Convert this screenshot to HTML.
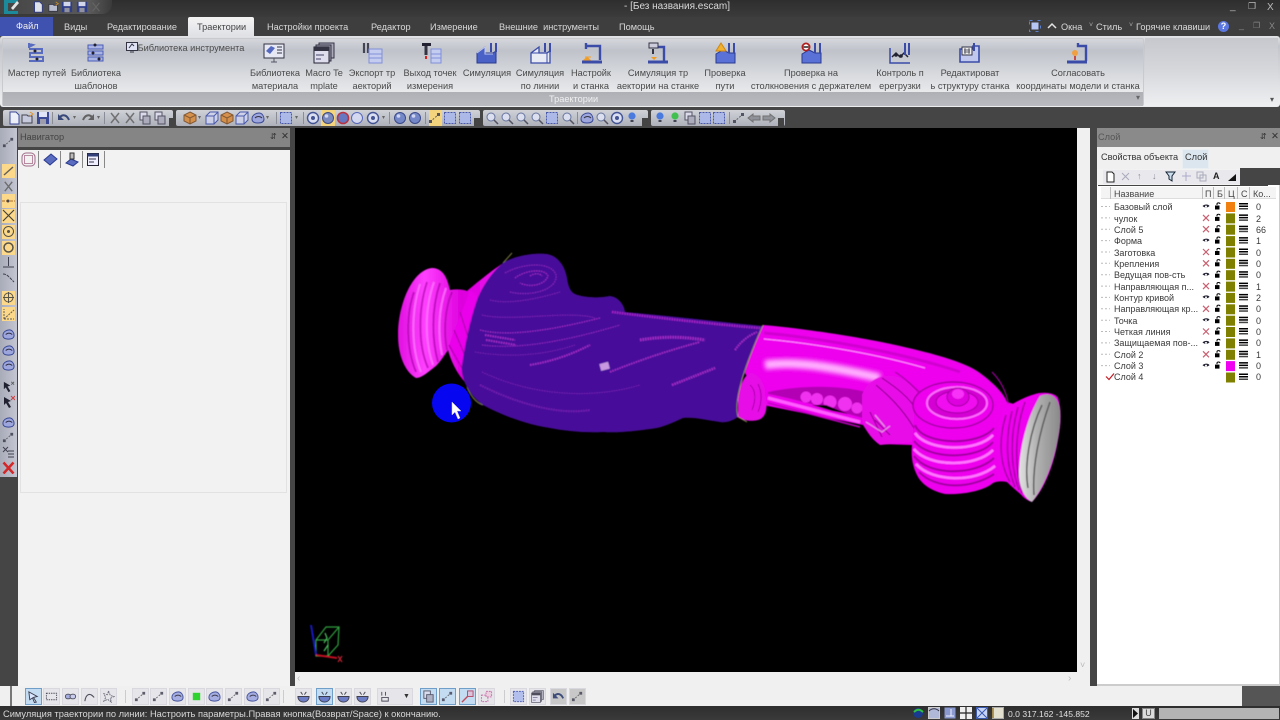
<!DOCTYPE html>
<html lang="ru"><head><meta charset="utf-8"><title>escam</title>
<style>
html,body{margin:0;padding:0;width:1280px;height:720px;overflow:hidden;background:#444;font-family:"Liberation Sans",sans-serif}
div,span,svg{position:absolute}
.m{top:22px;font-size:9.2px;color:#d8d8d8;white-space:nowrap}
.r{font-size:9.2px;color:#4a4a4a;text-align:center;white-space:nowrap;line-height:13px;transform:translateX(-50%)}
.ic{top:42px;width:22px;height:22px}
.tb{top:110px;height:16px;background:linear-gradient(#d0d2d8,#aeb0ba);border-radius:2px}
.ti{top:111px;width:14px;height:14px;opacity:.88}
.bi{top:688px;width:17px;height:17px;background:#e6e6ea;border:1px solid #d8d8de;box-sizing:border-box}
.bi.h{background:#c4dcf2;border-color:#6f9fc8}
.bi svg{left:1px;top:1px;width:13px;height:13px;opacity:.85}
.li{left:2px;width:13px;height:13px;opacity:.9}
.lh{left:2px;width:13px;height:14px;background:#fcd88a}
.nm{left:1114px;margin-top:1px;font-size:9px;color:#3a3a3a;white-space:nowrap;line-height:11px}
.ct{left:1256px;margin-top:1px;font-size:9px;color:#3a3a3a;line-height:11px}
.hd{top:189px;height:10px;font-size:9px;color:#444;line-height:10px;white-space:nowrap}
.dd{top:114px;font-size:6px;color:#666;line-height:8px}
.sp{top:112px;width:1px;height:12px;background:#8a8c96}
</style></head><body>
<svg width="0" height="0" style="left:0;top:0"><defs>
<symbol id="path" viewBox="0 0 22 22"><path d="M4 1v5M4 2l4 1-4 2M4 7h13v4H5v4h13v4H4" fill="none" stroke="#5a6cc0" stroke-width="2"/><circle cx="10" cy="9" r="1.5" fill="#223"/><circle cx="12" cy="17" r="1.5" fill="#223"/></symbol>
<symbol id="lib" viewBox="0 0 22 22"><path d="M3 3h15v4H3zM3 9h15v4H3zM3 15h15v4H3z" fill="#aab4e4" stroke="#4a5cb8"/><circle cx="10" cy="3" r="1.5" fill="#223"/><circle cx="8" cy="11" r="1.5" fill="#223"/><circle cx="14" cy="17" r="1.5" fill="#223"/></symbol>
<symbol id="mat" viewBox="0 0 22 22"><rect x="1" y="2" width="20" height="14" fill="#e6e8f4" stroke="#334"/><path d="M3 9l5-5 4 2-5 6z" fill="#5568c0"/><path d="M14 5h5M14 8h5M14 11h5" stroke="#334"/><path d="M8 20h6M11 16v4" stroke="#556"/></symbol>
<symbol id="mac" viewBox="0 0 22 22"><rect x="6" y="1" width="15" height="15" fill="#aab" stroke="#334"/><rect x="3" y="3" width="15" height="16" fill="#99a" stroke="#334"/><rect x="1" y="5" width="15" height="16" fill="#dde" stroke="#223"/><rect x="1" y="5" width="15" height="4" fill="#334"/><path d="M3 13h8M3 17h5" stroke="#446"/></symbol>
<symbol id="exp" viewBox="0 0 22 22"><path d="M3 1v10M7 1v10" stroke="#445" stroke-width="2.2"/><rect x="8" y="7" width="13" height="14" fill="#c4ccf0" stroke="#8090d8"/><path d="M8 12h13M8 16h13" stroke="#8090d8"/></symbol>
<symbol id="pt" viewBox="0 0 22 22"><path d="M2 1h9v3H2z" fill="#223"/><path d="M6 4v9" stroke="#334" stroke-width="3"/><path d="M6 14v3" stroke="#e02020" stroke-width="2"/><rect x="11" y="7" width="10" height="14" fill="#c4ccf0" stroke="#8090d8"/><path d="M11 12h10M11 16h10" stroke="#8090d8"/></symbol>
<symbol id="sim" viewBox="0 0 22 22"><path d="M1 21V11l8-6v6h8l3-2v12z" fill="#4a62c8" stroke="#2a3a90"/><path d="M1 11l8-6h0v7h8" fill="none" stroke="#c0c8f0"/><path d="M15 1v9M20 1v9" stroke="#3a4ca8" stroke-width="2"/></symbol>
<symbol id="siml" viewBox="0 0 22 22"><path d="M1 21V11l8-6v6h8l3-2v12z" fill="#e8eaf4" stroke="#3a4ca8" stroke-width="1.3"/><path d="M1 11h16v10M9 5v6" fill="none" stroke="#3a4ca8"/><path d="M15 1v9M20 1v9" stroke="#3a4ca8" stroke-width="2"/></symbol>
<symbol id="mc" viewBox="0 0 22 22"><path d="M5 1v6M5 4h14v14" fill="none" stroke="#3a4ca8" stroke-width="2.4"/><path d="M1 20h20" stroke="#3a4ca8" stroke-width="3"/><path d="M6 15l3 3h-6zM4 15h6" fill="#f09a20" stroke="#f0a030"/></symbol>
<symbol id="mc2" viewBox="0 0 22 22"><path d="M3 5h15v15" fill="none" stroke="#3a4ca8" stroke-width="2.4"/><rect x="3" y="1" width="9" height="5" fill="#ccd" stroke="#334"/><path d="M2 20h20" stroke="#3a4ca8" stroke-width="3"/><path d="M7 7v5" stroke="#334" stroke-width="2"/><path d="M5 15h6l-3 3z" fill="#f09a20"/></symbol>
<symbol id="chk" viewBox="0 0 22 22"><path d="M2 21v-9l7-4 6 3h6v10z" fill="#5a72d8" stroke="#2a3a90"/><path d="M15 1v10M20 1v10" stroke="#3a4ca8" stroke-width="2"/><path d="M7 1l5 8H2z" fill="#f0b030" stroke="#d08810"/></symbol>
<symbol id="col" viewBox="0 0 22 22"><path d="M2 21v-9l7-4 6 3h6v10z" fill="#5a72d8" stroke="#2a3a90"/><path d="M15 1v10M20 1v10" stroke="#3a4ca8" stroke-width="2"/><circle cx="6" cy="5" r="3.6" fill="#fff" stroke="#b02020" stroke-width="1.8"/><path d="M3.5 5h5" stroke="#222" stroke-width="1.5"/></symbol>
<symbol id="ctl" viewBox="0 0 22 22"><path d="M1 6v15h20" fill="none" stroke="#3a4ca8" stroke-width="1.5"/><path d="M3 15l4-4 4 4 4-4 4 4" fill="none" stroke="#223" stroke-width="1.5"/><circle cx="7" cy="13" r="1.8" fill="#223"/><circle cx="12" cy="14" r="1.8" fill="#223"/><path d="M16 1v12M20 1v12" stroke="#3a4ca8" stroke-width="2"/></symbol>
<symbol id="red" viewBox="0 0 22 22"><path d="M14 4h6v16H1V7h13z" fill="#c0c8ee" stroke="#3a4ca8" stroke-width="1.6"/><rect x="3" y="5" width="10" height="8" fill="#eee" stroke="#334"/><path d="M5 8h6M5 10h6M6 6v6M10 6v6" stroke="#334" stroke-width=".7"/><path d="M15 1v8" stroke="#3a4ca8" stroke-width="2"/></symbol>
<symbol id="crd" viewBox="0 0 22 22"><path d="M12 1v3h8v15" fill="none" stroke="#3a4ca8" stroke-width="2.4"/><path d="M1 20h20" stroke="#3a4ca8" stroke-width="3"/><circle cx="9" cy="11" r="3" fill="#f0a040"/><path d="M9 14v4" stroke="#c02020" stroke-width="1.5"/></symbol>
<symbol id="doc" viewBox="0 0 14 14"><path d="M3 1h6l3 3v9H3z" fill="#f4f6ff" stroke="#2a3a90"/></symbol>
<symbol id="opn" viewBox="0 0 14 14"><path d="M1 4h5l1 1h4v7H1z" fill="#c8cce0" stroke="#334"/><path d="M9 1l3 2-3 2" fill="none" stroke="#e09020"/></symbol>
<symbol id="sav" viewBox="0 0 14 14"><rect x="1" y="1" width="12" height="12" fill="#2a3a90"/><rect x="3" y="1" width="8" height="5" fill="#e4e8ff"/><rect x="4" y="8" width="6" height="5" fill="#99a"/></symbol>
<symbol id="und" viewBox="0 0 14 14"><path d="M3 6c3-3 7-2 9 3" fill="none" stroke="#26386e" stroke-width="2"/><path d="M1 3v6h6z" fill="#26386e"/></symbol>
<symbol id="rdo" viewBox="0 0 14 14"><path d="M11 6C8 3 4 4 2 9" fill="none" stroke="#555" stroke-width="2"/><path d="M13 3v6H7z" fill="#555"/></symbol>
<symbol id="x" viewBox="0 0 14 14"><path d="M3 2l8 10M11 2L3 12" stroke="#666" stroke-width="1.5"/></symbol>
<symbol id="cop" viewBox="0 0 14 14"><rect x="2" y="1" width="7" height="8" fill="#dde" stroke="#445"/><rect x="5" y="5" width="7" height="8" fill="#aab" stroke="#445"/></symbol>
<symbol id="box" viewBox="0 0 14 14"><path d="M7 1l6 3v6l-6 3-6-3V4z" fill="#d88a3a" stroke="#7a4a20"/><path d="M1 4l6 3 6-3M7 7v6" fill="none" stroke="#7a4a20"/></symbol>
<symbol id="cub" viewBox="0 0 14 14"><path d="M1 5l4-4h8v8l-4 4H1z" fill="#d0d4ec" stroke="#3a4ca8"/><path d="M1 5h8v8M9 5l4-4" fill="none" stroke="#3a4ca8"/></symbol>
<symbol id="bal" viewBox="0 0 14 14"><circle cx="7" cy="7" r="5.5" fill="#6a80c8" stroke="#2a3a80"/><circle cx="5.5" cy="5" r="1.8" fill="#d0d8f8"/></symbol>
<symbol id="rng" viewBox="0 0 14 14"><circle cx="7" cy="7" r="5.5" fill="#5a6cc0" stroke="#b82030" stroke-width="1.6"/></symbol>
<symbol id="rin" viewBox="0 0 14 14"><circle cx="7" cy="7" r="5.5" fill="#d8dcf4" stroke="#4a5cb8"/></symbol>
<symbol id="cyc" viewBox="0 0 14 14"><circle cx="7" cy="7" r="5.5" fill="#dfe3f8" stroke="#33468e" stroke-width="1.4"/><circle cx="7" cy="7" r="2" fill="#33468e"/></symbol>
<symbol id="zm" viewBox="0 0 14 14"><circle cx="6" cy="6" r="4" fill="#dfe3f4" stroke="#5a6a98"/><path d="M9 9l4 4" stroke="#445" stroke-width="1.5"/></symbol>
<symbol id="gl" viewBox="0 0 14 14"><circle cx="7" cy="5" r="3.6" fill="#3a70e0"/><path d="M5.5 9h3v2h-3z" fill="#334"/></symbol>
<symbol id="gg" viewBox="0 0 14 14"><circle cx="7" cy="5" r="3.6" fill="#30c040"/><path d="M5.5 9h3v2h-3z" fill="#334"/></symbol>
<symbol id="sel" viewBox="0 0 14 14"><rect x="1.500" y="1.500" width="11" height="11" fill="#aab8ec" stroke="#3a4ca8" stroke-dasharray="2 1"/></symbol>
<symbol id="arl" viewBox="0 0 14 14"><path d="M1 7l5-4v2h7v4H6v2z" fill="#8a8c94" stroke="#666"/></symbol>
<symbol id="arr" viewBox="0 0 14 14"><path d="M13 7L8 3v2H1v4h7v2z" fill="#8a8c94" stroke="#666"/></symbol>
<symbol id="nod" viewBox="0 0 14 14"><path d="M2 11L11 3" stroke="#555" stroke-dasharray="2 1.500"/><rect x="1" y="9" width="3" height="3" fill="#445"/><rect x="9" y="2" width="3" height="3" fill="#445"/></symbol>
<symbol id="srf" viewBox="0 0 14 14"><path d="M1 8c0-4 4-6 7-6s5 3 5 6-3 4-6 4-6-1-6-4z" fill="#9aa4e0" stroke="#2a3a90"/><path d="M4 7c2-2 5-2 7 0" fill="none" stroke="#223"/></symbol>
<symbol id="ptr" viewBox="0 0 14 14"><path d="M2 2l7 4-3 1 3 5-2 1-3-5-2 2z" fill="#112"/><path d="M10 2l3 3M13 2l-3 3" stroke="#555"/></symbol>
<symbol id="bwl" viewBox="0 0 14 14"><path d="M1 7h12c0 4-3 6-6 6S1 11 1 7z" fill="#5a6cc0" stroke="#223"/><path d="M4 2l2 3M10 2L8 5" stroke="#223"/></symbol>
</defs></svg>

<!-- title bar -->
<div style="left:0;top:0;width:1280px;height:17px;background:linear-gradient(#2e2e2e,#3b3b3b)"></div>
<div style="left:0;top:17px;width:1280px;height:19px;background:#3e3e3e"></div>
<div style="left:0;top:0;width:112px;height:14px;background:linear-gradient(90deg,#444,#5a5a5a 80%,#3a3a3a);border-radius:0 0 10px 0"></div>
<svg style="left:2px;top:0" width="20" height="15"><path d="M2 0h14v3H6v8h10v3H2z" fill="#1c8a9a"/><path d="M9 8l6-7 2 2-6 7z" fill="#e4e4e4"/></svg>
<svg class="ti" style="top:1px;left:32px;width:12px;height:12px"><use href="#doc"/></svg>
<svg class="ti" style="top:1px;left:48px;width:12px;height:12px"><use href="#opn"/></svg>
<svg class="ti" style="top:1px;left:61px;width:12px;height:12px"><use href="#sav"/></svg>
<svg class="ti" style="top:1px;left:76px;width:12px;height:12px"><use href="#sav"/></svg>
<svg class="ti" style="top:1px;left:90px;width:12px;height:12px"><use href="#x"/></svg>
<span style="left:624px;top:0px;font-size:10px;line-height:13px;color:#d8d8d8;white-space:nowrap">- [Без названия.escam]</span>
<span style="left:1230px;top:1px;font-size:10px;color:#bbb">_</span><span style="left:1248px;top:1px;font-size:9px;color:#bbb">❐</span><span style="left:1267px;top:2px;font-size:10px;color:#bbb">X</span>

<!-- menu -->
<div style="left:0;top:17px;width:53px;height:19px;background:#4052b0"></div>
<span class="m" style="left:16px;top:21px;color:#eee">Файл</span>
<span class="m" style="left:64px">Виды</span>
<span class="m" style="left:107px">Редактирование</span>
<div style="left:188px;top:17px;width:66px;height:20px;background:linear-gradient(#f4f4f4,#dedfe4);border-radius:2px 2px 0 0"></div>
<span class="m" style="left:197px;color:#444">Траектории</span>
<span class="m" style="left:267px">Настройки проекта</span>
<span class="m" style="left:371px">Редактор</span>
<span class="m" style="left:430px">Измерение</span>
<span class="m" style="left:499px">Внешние&nbsp; инструменты</span>
<span class="m" style="left:619px">Помощь</span>
<svg style="left:1029px;top:20px" width="12" height="12"><rect x=".5" y=".5" width="11" height="11" fill="none" stroke="#5a80d0" stroke-dasharray="3 5"/><rect x="2.500" y="2.500" width="7" height="7" fill="#b8c8f4"/></svg>
<svg style="left:1047px;top:22px" width="10" height="7"><path d="M1 6l4-4 4 4" fill="none" stroke="#e4e4e4" stroke-width="1.500"/></svg>
<span class="m" style="left:1061px">Окна</span>
<span class="m" style="left:1096px">Стиль</span>
<span class="m" style="left:1136px">Горячие клавиши</span>
<span style="left:1089px;top:22px;font-size:7px;color:#aaa">˅</span><span style="left:1129px;top:22px;font-size:7px;color:#aaa">˅</span>
<div style="left:1218px;top:21px;width:11px;height:11px;border-radius:50%;background:#5c78e0;color:#fff;font-size:9px;line-height:11px;text-align:center;font-weight:bold">?</div>
<span style="left:1239px;top:20px;font-size:9px;color:#888">_</span><span style="left:1253px;top:21px;font-size:8px;color:#888">❐</span><span style="left:1269px;top:21px;font-size:9px;color:#888">X</span>

<!-- ribbon -->
<div style="left:0;top:36px;width:1280px;height:71px;background:linear-gradient(#e2e3e6 0,#c3c5cc 10px,#d4d6da 35px,#ecedef 65px);border-radius:3px"></div>
<div style="left:2px;top:38px;width:1142px;height:68px;background:linear-gradient(#d4d6dc 0,#bfc2ca 12px,#d8dade 36px,#e9eaec 54px);border:1px solid #c8cace;box-sizing:border-box;border-radius:2px"></div>
<div style="left:3px;top:92px;width:1140px;height:14px;background:linear-gradient(#aeb0b6,#b9bbc0)"></div>
<div style="left:1145px;top:38px;width:133px;height:68px;background:linear-gradient(#c6c8ce,#d4d6da 30px,#eeeff1)"></div>
<span style="left:549px;top:94px;font-size:9.2px;color:#f0f0f0">Траектории</span>
<span style="left:1136px;top:93px;font-size:8px;color:#666">▾</span><span style="left:1270px;top:95px;font-size:8px;color:#555">▾</span>

<svg class="ic" style="left:25px"><use href="#path"/></svg>
<svg class="ic" style="left:85px"><use href="#lib"/></svg>
<svg style="left:126px;top:42px" width="12" height="11"><rect x=".5" y=".5" width="11" height="8" fill="#dfe3f4" stroke="#334"/><path d="M3 6l3-4 2 2M4 10h4" stroke="#334" fill="none"/></svg>
<span class="r" style="left:191px;top:42px">Библиотека инструмента</span>
<svg class="ic" style="left:263px"><use href="#mat"/></svg>
<svg class="ic" style="left:313px"><use href="#mac"/></svg>
<svg class="ic" style="left:361px"><use href="#exp"/></svg>
<svg class="ic" style="left:420px"><use href="#pt"/></svg>
<svg class="ic" style="left:476px"><use href="#sim"/></svg>
<svg class="ic" style="left:530px"><use href="#siml"/></svg>
<svg class="ic" style="left:581px"><use href="#mc"/></svg>
<svg class="ic" style="left:646px"><use href="#mc2"/></svg>
<svg class="ic" style="left:714px"><use href="#chk"/></svg>
<svg class="ic" style="left:800px"><use href="#col"/></svg>
<svg class="ic" style="left:889px"><use href="#ctl"/></svg>
<svg class="ic" style="left:959px"><use href="#red"/></svg>
<svg class="ic" style="left:1066px"><use href="#crd"/></svg>

<div class="r" style="left:37px;top:67px">Мастер путей</div>
<div class="r" style="left:96px;top:67px">Библиотека<br>шаблонов</div>
<div class="r" style="left:275px;top:67px">Библиотека<br>материала</div>
<div class="r" style="left:324px;top:67px">Macro Te<br>mplate</div>
<div class="r" style="left:372px;top:67px">Экспорт тр<br>аекторий</div>
<div class="r" style="left:430px;top:67px">Выход точек<br>измерения</div>
<div class="r" style="left:487px;top:67px">Симуляция</div>
<div class="r" style="left:540px;top:67px">Симуляция<br>по линии</div>
<div class="r" style="left:591px;top:67px">Настройк<br>и станка</div>
<div class="r" style="left:658px;top:67px">Симуляция тр<br>аектории на станке</div>
<div class="r" style="left:725px;top:67px">Проверка<br>пути</div>
<div class="r" style="left:811px;top:67px">Проверка на<br>столкновения с держателем</div>
<div class="r" style="left:900px;top:67px">Контроль п<br>ерегрузки</div>
<div class="r" style="left:970px;top:67px">Редактироват<br>ь структуру станка</div>
<div class="r" style="left:1078px;top:67px">Согласовать<br>координаты модели и станка</div>

<!-- toolbar row -->
<div style="left:0;top:107px;width:1280px;height:21px;background:#454545"></div>
<div class="tb" style="left:3px;width:170px"></div>
<div class="tb" style="left:176px;width:304px"></div>
<div class="tb" style="left:483px;width:165px"></div>
<div class="tb" style="left:651px;width:134px"></div>
<div style="left:169px;top:118px;width:6px;height:8px;background:#444"></div><div style="left:474px;top:118px;width:6px;height:8px;background:#444"></div><div style="left:642px;top:118px;width:6px;height:8px;background:#444"></div><div style="left:778px;top:118px;width:6px;height:8px;background:#444"></div>
<div style="left:429px;top:110px;width:13px;height:16px;background:#f4d57e"></div>
<div class="sp" style="left:52px"></div><div class="sp" style="left:104px"></div><div class="sp" style="left:276px"></div><div class="sp" style="left:303px"></div><div class="sp" style="left:389px"></div><div class="sp" style="left:425px"></div><div class="sp" style="left:577px"></div><div class="sp" style="left:729px"></div>
<span class="dd" style="left:73px">▾</span><span class="dd" style="left:97px">▾</span><span class="dd" style="left:198px">▾</span><span class="dd" style="left:266px">▾</span><span class="dd" style="left:295px">▾</span><span class="dd" style="left:382px">▾</span>
<svg class="ti" style="left:7px"><use href="#doc"/></svg>
<svg class="ti" style="left:21px"><use href="#opn"/></svg>
<svg class="ti" style="left:36px"><use href="#sav"/></svg>
<svg class="ti" style="left:57px"><use href="#und"/></svg>
<svg class="ti" style="left:81px"><use href="#rdo"/></svg>
<svg class="ti" style="left:108px"><use href="#x"/></svg>
<svg class="ti" style="left:123px"><use href="#x"/></svg>
<svg class="ti" style="left:138px"><use href="#cop"/></svg>
<svg class="ti" style="left:153px"><use href="#cop"/></svg>
<svg class="ti" style="left:183px"><use href="#box"/></svg>
<svg class="ti" style="left:205px"><use href="#cub"/></svg>
<svg class="ti" style="left:220px"><use href="#box"/></svg>
<svg class="ti" style="left:235px"><use href="#cub"/></svg>
<svg class="ti" style="left:251px"><use href="#srf"/></svg>
<svg class="ti" style="left:279px"><use href="#sel"/></svg>
<svg class="ti" style="left:306px"><use href="#cyc"/></svg>
<div style="left:321px;top:110px;width:14px;height:16px;background:#f4d57e"></div>
<svg class="ti" style="left:321px"><use href="#bal"/></svg>
<svg class="ti" style="left:336px"><use href="#rng"/></svg>
<svg class="ti" style="left:350px"><use href="#rin"/></svg>
<svg class="ti" style="left:366px"><use href="#cyc"/></svg>
<svg class="ti" style="left:393px"><use href="#bal"/></svg>
<svg class="ti" style="left:408px"><use href="#bal"/></svg>
<svg class="ti" style="left:428px"><use href="#nod"/></svg>
<svg class="ti" style="left:443px"><use href="#sel"/></svg>
<svg class="ti" style="left:458px"><use href="#sel"/></svg>
<svg class="ti" style="left:485px"><use href="#zm"/></svg>
<svg class="ti" style="left:500px"><use href="#zm"/></svg>
<svg class="ti" style="left:515px"><use href="#zm"/></svg>
<svg class="ti" style="left:530px"><use href="#zm"/></svg>
<svg class="ti" style="left:545px"><use href="#sel"/></svg>
<svg class="ti" style="left:561px"><use href="#zm"/></svg>
<svg class="ti" style="left:580px"><use href="#srf"/></svg>
<svg class="ti" style="left:595px"><use href="#zm"/></svg>
<svg class="ti" style="left:610px"><use href="#cyc"/></svg>
<svg class="ti" style="left:625px"><use href="#gl"/></svg>
<svg class="ti" style="left:653px"><use href="#gl"/></svg>
<svg class="ti" style="left:668px"><use href="#gg"/></svg>
<svg class="ti" style="left:683px"><use href="#cop"/></svg>
<svg class="ti" style="left:698px"><use href="#sel"/></svg>
<svg class="ti" style="left:712px"><use href="#sel"/></svg>
<svg class="ti" style="left:732px"><use href="#nod"/></svg>
<svg class="ti" style="left:747px"><use href="#arl"/></svg>
<svg class="ti" style="left:762px"><use href="#arr"/></svg>

<!-- main background -->
<div style="left:0;top:128px;width:1280px;height:578px;background:#454545"></div>

<!-- left toolbar -->
<div style="left:0;top:128px;width:17px;height:349px;background:linear-gradient(90deg,#a8abb8,#c4c6d2)"></div>
<div class="lh" style="top:164px"></div><div class="lh" style="top:194px"></div><div class="lh" style="top:209px"></div><div class="lh" style="top:225px"></div><div class="lh" style="top:241px"></div><div class="lh" style="top:291px"></div><div class="lh" style="top:307px"></div>
<svg class="li" style="top:136px"><use href="#nod"/></svg>
<svg class="li" style="top:164px"><path d="M2 11L11 3" stroke="#555" stroke-width="1.500"/></svg>
<svg class="li" style="top:180px"><use href="#x"/></svg>
<svg class="li" style="top:194px"><path d="M0 7h13" stroke="#a06020" stroke-dasharray="3 1"/><circle cx="6" cy="7" r="1.500" fill="#334"/></svg>
<svg class="li" style="top:209px"><path d="M1 1l11 11M12 1L1 12" stroke="#333" stroke-width="1.200"/></svg>
<svg class="li" style="top:225px"><circle cx="6.500" cy="6.500" r="5" fill="none" stroke="#444"/><circle cx="6.500" cy="6.500" r="1.500" fill="#444"/></svg>
<svg class="li" style="top:241px"><circle cx="6.500" cy="6.500" r="4.500" fill="none" stroke="#444" stroke-width="1.500"/></svg>
<svg class="li" style="top:256px"><path d="M6.500 1v9M1 11h11" stroke="#334"/></svg>
<svg class="li" style="top:271px"><path d="M1 3c4 0 6 3 11 8" stroke="#334" stroke-dasharray="3 1" fill="none"/></svg>
<svg class="li" style="top:291px"><circle cx="6.500" cy="6.500" r="4.500" fill="none" stroke="#444"/><path d="M1 6.500h11M6.500 1v11" stroke="#444"/></svg>
<svg class="li" style="top:307px"><path d="M2 12V2M2 12h10M2 12L12 3" stroke="#555" stroke-dasharray="2 1"/></svg>
<svg class="li" style="top:328px"><use href="#srf"/></svg>
<svg class="li" style="top:344px"><use href="#srf"/></svg>
<svg class="li" style="top:359px"><use href="#srf"/></svg>
<svg class="li" style="top:380px"><use href="#ptr"/></svg>
<svg class="li" style="top:395px"><path d="M2 2l7 4-3 1 3 5-2 1-3-5-2 2z" fill="#112"/><path d="M9 1l4 4M13 1L9 5" stroke="#d03030"/></svg>
<svg class="li" style="top:416px"><use href="#srf"/></svg>
<svg class="li" style="top:431px"><use href="#nod"/></svg>
<svg class="li" style="top:446px"><path d="M1 1l5 5M6 1L1 6" stroke="#334"/><path d="M6 5h6M6 8h6M6 11h6" stroke="#334"/></svg>
<svg class="li" style="top:461px"><path d="M1.500 1.500l10 11M11.500 1.500l-10 11" stroke="#d81818" stroke-width="2.500"/></svg>

<!-- navigator -->
<div style="left:18px;top:128px;width:272px;height:20px;background:#858585"></div>
<div style="left:18px;top:147px;width:272px;height:3px;background:#454545"></div>
<div style="left:18px;top:150px;width:272px;height:536px;background:#f2f2f2"></div>
<span style="left:20px;top:132px;font-size:9.2px;color:#444">Навигатор</span>
<span style="left:270px;top:132px;font-size:8px;color:#333">⇵</span><span style="left:281px;top:131px;font-size:9.5px;color:#333">✕</span>
<div style="left:38px;top:151px;width:1px;height:17px;background:#888"></div><div style="left:60px;top:151px;width:1px;height:17px;background:#888"></div><div style="left:82px;top:151px;width:1px;height:17px;background:#888"></div><div style="left:104px;top:151px;width:1px;height:17px;background:#888"></div>
<svg style="left:21px;top:152px" width="15" height="15"><rect x="1" y="1" width="13" height="13" rx="4" fill="none" stroke="#a06a88"/><rect x="3.500" y="3.500" width="8" height="8" fill="none" stroke="#b88aa0"/></svg>
<svg style="left:43px;top:152px" width="15" height="15"><path d="M1 8l7-6 6 5-7 6z" fill="#5a6cc0" stroke="#2a3a90"/></svg>
<svg style="left:65px;top:152px" width="15" height="15"><path d="M1 11l5-4 7 3-5 4z" fill="#5a6cc0" stroke="#2a3a90"/><path d="M5 1h4v6H5z" fill="#bbb" stroke="#333"/></svg>
<svg style="left:86px;top:152px" width="15" height="15"><rect x="1.500" y="1.500" width="11" height="12" fill="#eef" stroke="#223"/><rect x="1.500" y="1.500" width="11" height="3" fill="#33407a"/><path d="M3 7h7M3 10h5" stroke="#334"/></svg>
<div style="left:20px;top:202px;width:267px;height:291px;border:1px solid #e2e2e2;box-sizing:border-box;background:#f2f2f2"></div>

<!-- viewport -->
<div style="left:290px;top:128px;width:5px;height:560px;background:#454545"></div>
<div style="left:295px;top:128px;width:782px;height:544px;background:#000"></div>
<div style="left:1077px;top:128px;width:13px;height:558px;background:#f0f0f0"></div>
<div style="left:295px;top:672px;width:795px;height:14px;background:#f0f0f0"></div>
<span style="left:297px;top:673px;font-size:10px;color:#bbb">‹</span><span style="left:1068px;top:673px;font-size:10px;color:#bbb">›</span>
<span style="left:1080px;top:660px;font-size:9px;color:#bbb">˅</span>

<svg style="left:0;top:0" width="1280" height="720">
<defs>
<filter id="b" x="-5%" y="-5%" width="110%" height="110%"><feGaussianBlur stdDeviation=".55"/></filter>
<filter id="b3" x="-20%" y="-50%" width="140%" height="200%"><feGaussianBlur stdDeviation="2.500"/></filter>
<linearGradient id="fl" x1="0" y1="0" x2="1" y2="0"><stop offset="0" stop-color="#e010e0"/><stop offset=".25" stop-color="#ff40ff"/><stop offset=".6" stop-color="#dd00dd"/><stop offset="1" stop-color="#f010f0"/></linearGradient>
<linearGradient id="gy" x1="0" y1="0" x2="1" y2="0"><stop offset="0" stop-color="#e2e2e2"/><stop offset=".45" stop-color="#b0b0b0"/><stop offset="1" stop-color="#8a8a8a"/></linearGradient>
</defs>
<g filter="url(#b)">
<!-- left flange -->
<path d="M432 268C445 268 448 282 450 290C456 289 462 289 467 291C480 280 495 268 505 262L490 300L468 385C460 378 452 365 448 350C444 356 440 362 436 366C428 372 422 378 416 378C405 372 398 355 398 335C398 305 412 270 432 268Z" fill="url(#fl)"/>
<path d="M414 292C406 315 406 348 416 372M427 282C418 310 418 345 428 368M440 283C431 310 432 340 438 362M452 292C444 310 444 335 447 350" fill="none" stroke="#a800a8" stroke-width="2" opacity=".65"/>
<path d="M420 284C411 312 411 348 421 372M434 282C424 310 425 342 433 365M446 288C438 310 438 335 442 355" fill="none" stroke="#ff80ff" stroke-width="2" opacity=".7"/>
<path d="M470 290C460 318 452 335 449 347L463 375L482 300Z" fill="#ea00ea"/>
<path d="M449 345l15 27M454 330l12 28M460 312l8 25" stroke="#a000a0" stroke-width="1"/>
<path d="M503 263L512 253M467 387C470 395 476 403 483 405" stroke="#7a7a40" fill="none"/>
<!-- purple -->
<path d="M503 263C510 258 530 252 547 254C558 256 565 266 567 278C568 285 570 292 575 294C585 298 600 298 610 296C618 297 624 304 625 312C670 316 720 322 763 326C755 345 745 370 738 395C736 405 737 412 738 417C732 421 726 423 720 422C705 420 695 417 683 418C672 423 662 428 650 429C635 431 620 433 603 432C585 433 565 431 550 428C530 425 505 417 483 405C475 399 470 393 467 387C463 380 461 372 462 365C465 345 470 320 477 300C482 287 492 272 503 263Z" fill="#47109a"/>
<g fill="none" stroke="#a82cc8" stroke-width="1.100" stroke-dasharray="1.500 1">
<path d="M505 273C525 262 552 262 556 275C558 290 530 297 510 292" opacity=".75"/>
<path d="M515 278C525 270 545 268 548 276C545 285 530 288 520 283M530 276c4-3 10-3 12 0"/>
<path d="M490 300C510 305 540 298 560 292" opacity=".6"/>
<path d="M482 315C510 322 570 310 595 318" opacity=".6"/>
<path d="M480 330C510 338 560 328 600 318"/>
<path d="M482 345C520 350 570 340 620 325" opacity=".8"/>
<path d="M475 352C510 358 545 355 575 345" opacity=".5"/>
<path d="M530 365C560 360 580 350 590 345" stroke-width="2"/>
<path d="M610 372C640 360 670 350 700 342" stroke-width="1.800"/>
<path d="M612 312C660 318 720 325 760 328" stroke="#b828d0" stroke-width="2.500" opacity=".85"/>
<path d="M640 340C670 335 690 338 705 340" stroke-width="3"/>
<path d="M672 385C690 378 705 372 715 368" stroke-width="2.500"/>
<path d="M480 385C520 405 560 415 590 410" opacity=".5" stroke-width="2"/>
<path d="M482 372C530 395 590 400 640 385" opacity=".5"/>
<path d="M735 350C742 340 750 335 757 332" stroke-width="2"/>
<path d="M485 335l30 5M486 340l30 5" stroke-width="2"/>
</g>
<rect x="600" y="363" width="9" height="7" fill="#c898e0" transform="rotate(-15 604 366)"/>
<!-- right body -->
<path d="M763 325C800 328 860 337 900 346C935 354 965 362 980 373C992 382 1003 392 1007 402C1010 403 1014 404 1017 405C1024 399 1032 394 1040 393C1048 392 1056 394 1058 398C1062 410 1061 425 1058 440C1054 465 1044 490 1032 502C1026 500 1022 497 1018 490C1014 487 1010 484 1007 482C1002 481 997 481 993 483C985 490 965 495 945 494C932 491 922 485 917 475C912 465 911 455 912 445L880 444C873 440 866 430 863 425L763 405L745 373C750 355 755 340 763 325Z" fill="#ee00ee"/>
<path d="M765 365C800 360 845 370 880 378" stroke="#ffb0ff" stroke-width="9" fill="none" filter="url(#b3)"/>
<path d="M764 333C820 338 900 352 960 372" stroke="#d000d0" stroke-width="3" fill="none"/>
<path d="M764 339C820 344 880 355 925 368" stroke="#ff90ff" stroke-width="1" fill="none"/>
<path d="M768 392C800 385 840 385 866 392L870 420C840 412 800 400 768 394Z" fill="#b400b4"/>
<g fill="#f030f0"><circle cx="806" cy="397" r="5.500"/><circle cx="817" cy="399" r="6"/><circle cx="830" cy="402" r="6.500"/><circle cx="845" cy="404" r="7"/><circle cx="857" cy="408" r="5.500"/></g>
<path d="M812 405L832 411L848 414L826 405Z" fill="#000"/>
<path d="M768 398L860 422" stroke="#ff60ff" stroke-width="3"/>
<path d="M768 403L860 427" stroke="#c000c0" stroke-width="1.500"/>
<!-- left knot -->
<path d="M738 397C740 385 745 373 752 373C760 376 766 385 765 395C768 405 767 418 758 420C750 422 742 420 738 417Z" fill="#e610e6"/><path d="M750 385c6 5 6 15 2 25M758 384c4 8 4 18 0 28" stroke="#a800a8" fill="none"/>
<!-- middle head -->
<path d="M862 395C868 378 885 372 900 378C915 385 922 395 915 405L912 442L880 445C870 438 864 428 862 418Z" fill="#e810e8"/>
<path d="M882 378C892 385 908 395 918 412M876 385C888 395 902 408 914 428M870 412l12 25M875 420l15 15M895 372C905 378 915 388 925 398" stroke="#a000a0" stroke-width="1.300" fill="none"/>
<path d="M866 422l16 10 8-6M875 415l10 12" stroke="#e0a0e0" fill="none"/>
<!-- scroll -->
<g fill="none">
<path d="M915 425C922 445 978 447 994 428" stroke="#a000a0" stroke-width="2"/>
<path d="M914 441C928 460 978 460 993 442" stroke="#a000a0" stroke-width="2"/>
<path d="M914 456C928 476 975 476 994 458" stroke="#a000a0" stroke-width="2"/>
<path d="M919 472C935 489 970 490 994 474" stroke="#a000a0" stroke-width="2"/>
<path d="M915 433C928 452 978 452 993 435" stroke="#ff78ff" stroke-width="2.500"/>
<path d="M914 449C928 467 976 468 993 450" stroke="#ff78ff" stroke-width="2.500"/>
<path d="M916 464C932 482 975 483 995 466" stroke="#ff78ff" stroke-width="2.500"/>
<ellipse cx="953" cy="405" rx="40" ry="23" fill="#ee00ee" stroke="#a400a4" stroke-width="1.500"/>
<ellipse cx="957" cy="403" rx="30" ry="16" stroke="#ff70ff" stroke-width="1.800" fill="#d400d4"/>
<ellipse cx="957" cy="402" rx="21" ry="11" stroke="#a800a8" stroke-width="1.200" fill="#f010f0"/>
<ellipse cx="958" cy="397" rx="11" ry="9" fill="#de00de" stroke="#a000a0"/>
<ellipse cx="958" cy="394" rx="6" ry="5" fill="#f830f8"/>
</g>
<path d="M992 372C1005 385 1008 400 1008 404" stroke="#b000b0" fill="none"/>
<!-- right flange -->
<path d="M1003 410C1015 402 1028 395 1040 393C1030 420 1018 460 1024 497C1018 492 1012 487 1007 482C998 470 990 445 1003 410Z" fill="#f000f0"/>
<path d="M1006 415C998 440 1000 465 1010 482M1012 411C1005 440 1006 465 1015 487M1018 407C1010 435 1010 465 1019 490M1025 402C1015 430 1014 465 1022 493" stroke="#a000a0" stroke-width="1.500" fill="none"/>
<path d="M1040 396C1050 392 1058 396 1060 410C1062 435 1050 480 1032 502C1024 498 1018 485 1019 470C1020 445 1028 415 1040 396Z" fill="url(#gy)"/>
<path d="M1042 405C1030 430 1024 465 1028 488M1050 402C1040 430 1032 465 1034 495" stroke="#5a5a5a" stroke-width="1.500" fill="none"/>
<path d="M738 417C733 400 745 365 763 325" stroke="#8a8a50" fill="none"/>
<path d="M738 417L747 422" stroke="#8a8a50"/>
<!-- axis -->
<g fill="none" stroke-width="1.200">
<path d="M316 640L326 627H339L338 645L328 656H316Z" stroke="#30a040"/>
<path d="M316 640H328V656M328 640L339 627" stroke="#30a040"/>
<path d="M311 625L316 655" stroke="#1818c0" stroke-width="2"/>
<path d="M316 655L337 658" stroke="#c01020" stroke-width="2"/>
<path d="M338 656l4 6M342 656l-4 6" stroke="#c02030"/>
<path d="M325 633l2 5-3 5M328 645l-4 6" stroke="#50c060"/>
</g>
</g>
<!-- cursor circle -->
<circle cx="451.500" cy="403" r="19.500" fill="#0606f0"/>
<path d="M452 402L452 415L455 412L458 419L460 418L457 411L461 411Z" fill="#fff" stroke="#ccc" stroke-width=".5"/>
</svg>

<!-- right panel -->
<div style="left:1090px;top:128px;width:7px;height:560px;background:#454545"></div>
<div style="left:1097px;top:128px;width:183px;height:558px;background:#fff;border-right:1px solid #ccc;border-bottom:2px solid #ccc;box-sizing:border-box"></div>
<div style="left:1097px;top:128px;width:183px;height:19px;background:#8a8a8a"></div>
<span style="left:1098px;top:132px;font-size:9.2px;color:#555">Слой</span>
<span style="left:1260px;top:132px;font-size:8px;color:#333">⇵</span><span style="left:1271px;top:131px;font-size:9.5px;color:#333">✕</span>
<div style="left:1097px;top:147px;width:183px;height:22px;background:#f0f0f0"></div>
<span style="left:1101px;top:152px;font-size:9.2px;color:#333">Свойства объекта</span>
<div style="left:1182px;top:149px;width:27px;height:20px;background:#dbe6ee;border:1px solid #e8eef2;box-sizing:border-box"></div>
<span style="left:1185px;top:152px;font-size:9.2px;color:#333">Слой</span>
<div style="left:1097px;top:169px;width:183px;height:16px;background:#f2f2f2"></div>
<div style="left:1240px;top:168px;width:40px;height:17px;background:#454545"></div>
<div style="left:1103px;top:170px;width:137px;height:14px;background:#e9e9ed"></div>
<svg style="left:1105px;top:171px" width="10" height="12"><path d="M2 1h5l2 2v8H2z" fill="#fff" stroke="#222"/></svg>
<svg style="left:1121px;top:172px" width="9" height="9"><path d="M1 1l7 7M8 1L1 8" stroke="#aab"/></svg>
<span style="left:1137px;top:171px;font-size:9px;color:#889">↑</span><span style="left:1152px;top:171px;font-size:9px;color:#889">↓</span>
<svg style="left:1165px;top:171px" width="11" height="11"><path d="M1 1h9L7 5v5L4 8V5z" fill="#cde" stroke="#123"/></svg>
<svg style="left:1181px;top:171px" width="11" height="11"><path d="M1 5h9M5 1v9" stroke="#aac" /></svg>
<svg style="left:1196px;top:171px" width="11" height="11"><rect x="1" y="1" width="6" height="6" fill="none" stroke="#aab"/><rect x="4" y="4" width="6" height="6" fill="none" stroke="#aab"/></svg>
<span style="left:1213px;top:171px;font-size:9px;font-weight:bold;color:#222">A</span>
<svg style="left:1227px;top:172px" width="10" height="10"><path d="M1 9L9 2v7z" fill="#111"/></svg>
<div style="left:1101px;top:187px;width:175px;height:12px;background:#f4f4f4;border-bottom:1px solid #ddd;box-sizing:border-box"></div>
<div style="left:1098px;top:185px;width:170px;height:1px;background:#444"></div>
<div style="left:1110px;top:187px;width:1px;height:12px;background:#bbb"></div><div style="left:1202px;top:187px;width:1px;height:12px;background:#bbb"></div><div style="left:1213px;top:187px;width:1px;height:12px;background:#bbb"></div><div style="left:1224px;top:187px;width:1px;height:12px;background:#bbb"></div><div style="left:1237px;top:187px;width:1px;height:12px;background:#bbb"></div><div style="left:1249px;top:187px;width:1px;height:12px;background:#bbb"></div>
<span class="hd" style="left:1114px">Название</span><span class="hd" style="left:1205px">П</span><span class="hd" style="left:1217px">Б</span><span class="hd" style="left:1228px">Ц</span><span class="hd" style="left:1241px">С</span><span class="hd" style="left:1253px">Ко...</span>

<span class="nm" style="top:201px">Базовый слой</span><span class="ct" style="top:201px">0</span>
<span class="nm" style="top:213px">чулок</span><span class="ct" style="top:213px">2</span>
<span class="nm" style="top:224px">Слой 5</span><span class="ct" style="top:224px">66</span>
<span class="nm" style="top:235px">Форма</span><span class="ct" style="top:235px">1</span>
<span class="nm" style="top:247px">Заготовка</span><span class="ct" style="top:247px">0</span>
<span class="nm" style="top:258px">Крепления</span><span class="ct" style="top:258px">0</span>
<span class="nm" style="top:269px">Ведущая пов-сть</span><span class="ct" style="top:269px">0</span>
<span class="nm" style="top:281px">Направляющая п...</span><span class="ct" style="top:281px">1</span>
<span class="nm" style="top:292px">Контур кривой</span><span class="ct" style="top:292px">2</span>
<span class="nm" style="top:303px">Направляющая кр...</span><span class="ct" style="top:303px">0</span>
<span class="nm" style="top:315px">Точка</span><span class="ct" style="top:315px">0</span>
<span class="nm" style="top:326px">Четкая линия</span><span class="ct" style="top:326px">0</span>
<span class="nm" style="top:337px">Защищаемая пов-...</span><span class="ct" style="top:337px">0</span>
<span class="nm" style="top:349px">Слой 2</span><span class="ct" style="top:349px">1</span>
<span class="nm" style="top:360px">Слой 3</span><span class="ct" style="top:360px">0</span>
<span class="nm" style="top:371px">Слой 4</span><span class="ct" style="top:371px">0</span>

<svg style="left:1097px;top:200px" width="183" height="190">
<defs>
<g id="ey"><path d="M105.500 6c2-2 6-2 7 0-2 2-5 2-7 0z" fill="#223"/><circle cx="109" cy="6.500" r="1" fill="#fff"/></g>
<g id="cx"><path d="M106 3.500l6 6M112 3.500l-6 6" stroke="#c86070" stroke-width="1.200"/></g>
<g id="lk"><rect x="118" y="5.500" width="4.500" height="4" fill="#000"/><path d="M120 5V4c0-1.500 3-1.500 3 0" stroke="#000" fill="none"/></g>
<g id="ll"><rect x="142" y="3" width="9" height="1.500" fill="#000"/><rect x="142" y="5.500" width="9" height="1.500" fill="#000"/><rect x="142" y="8" width="9" height="1.500" fill="#444"/></g>
<g id="dot"><path d="M4 6.500h9" stroke="#bbb" stroke-dasharray="2 2"/></g>
</defs>
<g>
<g><use href="#ey"/><use href="#lk"/><rect x="129" y="2" width="9" height="10" fill="#f08010"/><use href="#ll"/><use href="#dot"/></g>
<g transform="translate(0,11.400)"><use href="#cx"/><use href="#lk"/><rect x="129" y="2" width="9" height="10" fill="#808000"/><use href="#ll"/><use href="#dot"/></g>
<g transform="translate(0,22.700)"><use href="#cx"/><use href="#lk"/><rect x="129" y="2" width="9" height="10" fill="#808000"/><use href="#ll"/><use href="#dot"/></g>
<g transform="translate(0,34.100)"><use href="#ey"/><use href="#lk"/><rect x="129" y="2" width="9" height="10" fill="#808000"/><use href="#ll"/><use href="#dot"/></g>
<g transform="translate(0,45.500)"><use href="#cx"/><use href="#lk"/><rect x="129" y="2" width="9" height="10" fill="#808000"/><use href="#ll"/><use href="#dot"/></g>
<g transform="translate(0,56.800)"><use href="#cx"/><use href="#lk"/><rect x="129" y="2" width="9" height="10" fill="#808000"/><use href="#ll"/><use href="#dot"/></g>
<g transform="translate(0,68.200)"><use href="#ey"/><use href="#lk"/><rect x="129" y="2" width="9" height="10" fill="#808000"/><use href="#ll"/><use href="#dot"/></g>
<g transform="translate(0,79.600)"><use href="#cx"/><use href="#lk"/><rect x="129" y="2" width="9" height="10" fill="#808000"/><use href="#ll"/><use href="#dot"/></g>
<g transform="translate(0,90.900)"><use href="#ey"/><use href="#lk"/><rect x="129" y="2" width="9" height="10" fill="#808000"/><use href="#ll"/><use href="#dot"/></g>
<g transform="translate(0,102.300)"><use href="#cx"/><use href="#lk"/><rect x="129" y="2" width="9" height="10" fill="#808000"/><use href="#ll"/><use href="#dot"/></g>
<g transform="translate(0,113.700)"><use href="#ey"/><use href="#lk"/><rect x="129" y="2" width="9" height="10" fill="#808000"/><use href="#ll"/><use href="#dot"/></g>
<g transform="translate(0,125)"><use href="#cx"/><use href="#lk"/><rect x="129" y="2" width="9" height="10" fill="#808000"/><use href="#ll"/><use href="#dot"/></g>
<g transform="translate(0,136.400)"><use href="#ey"/><use href="#lk"/><rect x="129" y="2" width="9" height="10" fill="#808000"/><use href="#ll"/><use href="#dot"/></g>
<g transform="translate(0,147.800)"><use href="#cx"/><use href="#lk"/><rect x="129" y="2" width="9" height="10" fill="#808000"/><use href="#ll"/><use href="#dot"/></g>
<g transform="translate(0,159.100)"><use href="#ey"/><use href="#lk"/><rect x="129" y="2" width="9" height="10" fill="#f000f0"/><use href="#ll"/><use href="#dot"/></g>
<g transform="translate(0,170.500)"><path d="M9 6l3 3 5-6" stroke="#c81820" stroke-width="1.200" fill="none"/><rect x="129" y="2" width="9" height="10" fill="#808000"/><use href="#ll"/></g>
</g>
</svg>

<!-- bottom toolbar -->
<div style="left:0;top:686px;width:1242px;height:20px;background:#f0f0f0"></div>
<div style="left:0;top:477px;width:15px;height:209px;background:#454545"></div>
<div style="left:10px;top:686px;width:2px;height:20px;background:#777"></div>
<div style="left:1242px;top:686px;width:38px;height:20px;background:#555"></div>
<div class="bi h" style="left:25px"><svg viewBox="0 0 14 14"><path d="M2 2l9 5-4 1 3 5-2 .5-2-5-3 2z" fill="#dfe8ff" stroke="#223"/></svg></div>
<div class="bi" style="left:43px"><svg viewBox="0 0 14 14"><rect x="1.500" y="3.500" width="11" height="7" fill="none" stroke="#334" stroke-dasharray="1.500 1"/></svg></div>
<div class="bi" style="left:62px"><svg viewBox="0 0 14 14"><rect x="1.500" y="4.500" width="6" height="5" rx="2.500" fill="#9aa4e0" stroke="#334"/><rect x="6.500" y="4.500" width="6" height="5" rx="2.500" fill="#c4c8f0" stroke="#334"/></svg></div>
<div class="bi" style="left:81px"><svg viewBox="0 0 14 14"><path d="M2 12C3 5 7 2 12 8" fill="none" stroke="#334" stroke-width="1.200"/></svg></div>
<div class="bi" style="left:100px"><svg viewBox="0 0 14 14"><path d="M7 1l2 5 4 1-4 2 1 4-4-3-4 2 2-4-2-4 4 1z" fill="none" stroke="#556" stroke-dasharray="2 1"/></svg></div>
<div class="bi" style="left:132px"><svg><use href="#nod"/></svg></div>
<div class="bi" style="left:150px"><svg><use href="#nod"/></svg></div>
<div class="bi" style="left:169px"><svg><use href="#srf"/></svg></div>
<div class="bi" style="left:188px"><svg viewBox="0 0 14 14"><rect x="3" y="3" width="8" height="8" fill="#10d010"/></svg></div>
<div class="bi" style="left:206px"><svg><use href="#srf"/></svg></div>
<div class="bi" style="left:225px"><svg><use href="#nod"/></svg></div>
<div class="bi" style="left:244px"><svg><use href="#srf"/></svg></div>
<div class="bi" style="left:263px"><svg><use href="#nod"/></svg></div>
<div class="bi" style="left:295px"><svg><use href="#bwl"/></svg></div>
<div class="bi h" style="left:316px"><svg><use href="#bwl"/></svg></div>
<div class="bi" style="left:335px"><svg><use href="#bwl"/></svg></div>
<div class="bi" style="left:354px"><svg><use href="#bwl"/></svg></div>
<div class="bi" style="left:377px;width:36px"><svg viewBox="0 0 14 14"><path d="M3 6V2M7 2v4M3 8h7v4H3z" fill="none" stroke="#334"/></svg><span style="left:25px;top:4px;font-size:7px;color:#333">▼</span></div>
<div class="bi h" style="left:420px"><svg><use href="#cop"/></svg></div>
<div class="bi h" style="left:439px"><svg><use href="#nod"/></svg></div>
<div class="bi h" style="left:459px"><svg viewBox="0 0 14 14"><rect x="7" y="1" width="6" height="6" fill="#e0c0d8" stroke="#b03050"/><path d="M1 13L7 7" stroke="#c03040" stroke-width="1.500"/></svg></div>
<div class="bi" style="left:478px"><svg viewBox="0 0 14 14"><rect x="1.500" y="5.500" width="7" height="7" fill="none" stroke="#c060a0" stroke-dasharray="2 1"/><rect x="6.500" y="1.500" width="6" height="6" fill="#ecd" stroke="#c060a0" stroke-dasharray="2 1"/></svg></div>
<div class="bi" style="left:510px"><svg><use href="#sel"/></svg></div>
<div class="bi" style="left:529px"><svg><use href="#mac"/></svg></div>
<div class="bi" style="left:550px;background:#c8c8c8"><svg><use href="#und"/></svg></div>
<div class="bi" style="left:569px;background:#c8c8c8"><svg><use href="#nod"/></svg></div>
<div style="left:125px;top:690px;width:1px;height:13px;background:#ccc"></div><div style="left:283px;top:690px;width:1px;height:13px;background:#ccc"></div><div style="left:504px;top:690px;width:1px;height:13px;background:#ccc"></div>

<!-- status bar -->
<div style="left:0;top:706px;width:1280px;height:14px;background:linear-gradient(#2e2e2e,#3a3a3a)"></div>
<span style="left:3px;top:709px;font-size:9.3px;color:#d8d8d8;white-space:nowrap;line-height:11px">Симуляция траектории по линии: Настроить параметры.Правая кнопка(Возврат/Space) к окончанию.</span>
<svg style="left:912px;top:707px" width="12" height="12"><circle cx="6" cy="6" r="5" fill="#1a3a90"/><path d="M2 5c3-3 6-3 9 0" stroke="#30c040" stroke-width="2" fill="none"/></svg>
<svg style="left:928px;top:707px" width="12" height="12"><rect x=".5" y=".5" width="11" height="11" fill="#b0b8d8" stroke="#ccc"/><path d="M1 4c3-3 7-3 10 0" stroke="#334" fill="none"/></svg>
<svg style="left:944px;top:707px" width="12" height="12"><rect x=".5" y=".5" width="11" height="11" fill="#8a9ad0"/><path d="M2 9h8M7 2v7" stroke="#eef"/></svg>
<svg style="left:960px;top:707px" width="12" height="12"><rect x="0" y="0" width="12" height="12" fill="#eee"/><path d="M6 0v12M0 6h12" stroke="#222" stroke-width="1.200"/></svg>
<svg style="left:976px;top:707px" width="12" height="12"><rect x=".5" y=".5" width="11" height="11" fill="#c8d4f4" stroke="#3a5ab0"/><path d="M1 1l10 10M11 1L1 11" stroke="#3a5ab0"/></svg>
<svg style="left:992px;top:707px" width="12" height="12"><rect x=".5" y=".5" width="11" height="11" fill="#e4e0d0" stroke="#aaa"/><path d="M1 1v10" stroke="#a08030" stroke-width="1.500"/></svg>
<span style="left:1008px;top:709px;font-size:8.6px;color:#e0e0e0;white-space:nowrap;line-height:11px">0.0 317.162 -145.852</span>
<svg style="left:1132px;top:708px" width="7" height="11"><rect width="7" height="11" fill="#ddd"/><path d="M1 1l5 4.500-5 4.500z" fill="#111"/></svg>
<div style="left:1142px;top:708px;width:13px;height:11px;background:#ddd;border:1px solid #888;box-sizing:border-box;font-size:9px;line-height:9px;text-align:center;color:#444">U</div>
<div style="left:1159px;top:708px;width:120px;height:11px;background:#b4b4b4"></div>
</body></html>
